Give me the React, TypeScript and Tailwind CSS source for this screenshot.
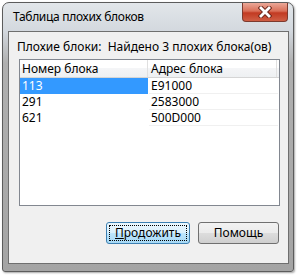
const rows = [
  { num: '113', addr: 'E91000', selected: true },
  { num: '291', addr: '2583000', selected: false },
  { num: '621', addr: '500D000', selected: false },
];

const CloseGlyph = () => (
  <svg width="14" height="12" viewBox="0 0 14 12">
    <path d="M3 2 L11 10 M11 2 L3 10" stroke="#6b2418" strokeWidth="4.6" strokeLinecap="square" />
    <path d="M3 2 L11 10 M11 2 L3 10" stroke="#ffffff" strokeWidth="2.8" strokeLinecap="square" />
  </svg>
);

const App = () => {
  return (
    <div
      className="w-[297px] h-[275px] bg-white pt-[2px] pl-[2px] text-[12px] text-black"
      style={{ fontFamily: '"Noto Sans", "Open Sans", sans-serif' }}
    >
      <div className="w-[292px] h-[270px] rounded-t-[7px] rounded-b-[3px] border border-[#5c5c5c] bg-[linear-gradient(#e2e6ea_0px,#d3d8de_28px,#b0b0b0_60px,#a4a4a4_100%)] shadow-[1px_1px_2px_rgba(0,0,0,0.35)] flex flex-col">
        <div className="h-[28px] flex items-start justify-between">
          <span className="pl-[10px] pt-[6px] leading-[16px] tracking-[-0.3px]">Таблица плохих блоков</span>
          <div className="mr-[5px] w-[46px] h-[19px] rounded-b-[4px] border border-t-0 border-[#7d3a2e] bg-[linear-gradient(#eba898_0%,#d96f58_45%,#c23a22_55%,#cf5f45_100%)] flex items-center justify-center">
            <CloseGlyph />
          </div>
        </div>
        <div className="ml-[5px] w-[281px] h-[233px] border border-[#6f6f6f] bg-[#f0f0f0] flex flex-col">
          <div className="pl-[8px] pt-[7px] leading-[16px] whitespace-nowrap">
            Плохие блоки:&nbsp; Найдено 3 плохих блока(ов)
          </div>
          <div className="ml-[10px] mt-[4px] w-[261px] h-[147px] border border-[#828790] bg-white flex flex-col">
            <div className="h-[18px] flex border-b border-[#d5d5d5] bg-[linear-gradient(#ffffff_0%,#ffffff_50%,#f4f5f7_50%,#eef0f2_100%)] leading-[18px]">
              <div className="w-[128px] pl-[2px] border-r border-[#e0e0e0]">Номер блока</div>
              <div className="w-[129px] pl-[3px] border-r border-[#e0e0e0]">Адрес блока</div>
            </div>
            {rows.map((r) => (
              <div key={r.num} className="h-[16px] flex leading-[16px]">
                <div
                  className={
                    r.selected
                      ? 'w-[128px] pl-[2px] bg-[#3399ff] text-white'
                      : 'w-[128px] pl-[2px]'
                  }
                >
                  {r.num}
                </div>
                <div className="w-[129px] ml-[1px] pl-[2px] border-b border-[#f0f0f0]">{r.addr}</div>
              </div>
            ))}
          </div>
          <div className="mt-[16px] pr-[9px] flex justify-end gap-[8px]">
            <button className="w-[84px] h-[22px] rounded-[3px] border border-[#3c7fb1] bg-[linear-gradient(#eaf6fd_0%,#d9f0fc_50%,#bee6fd_50%,#a7d9f5_100%)] outline-1 outline-dotted outline-black outline-offset-[-4px] leading-[20px]">
              <u>П</u>родожить
            </button>
            <button className="w-[81px] h-[22px] rounded-[3px] border border-[#707070] bg-[linear-gradient(#f2f2f2_0%,#ebebeb_50%,#dddddd_50%,#cfcfcf_100%)] leading-[20px]">
              Помощь
            </button>
          </div>
        </div>
      </div>
    </div>
  );
};

export default App;
